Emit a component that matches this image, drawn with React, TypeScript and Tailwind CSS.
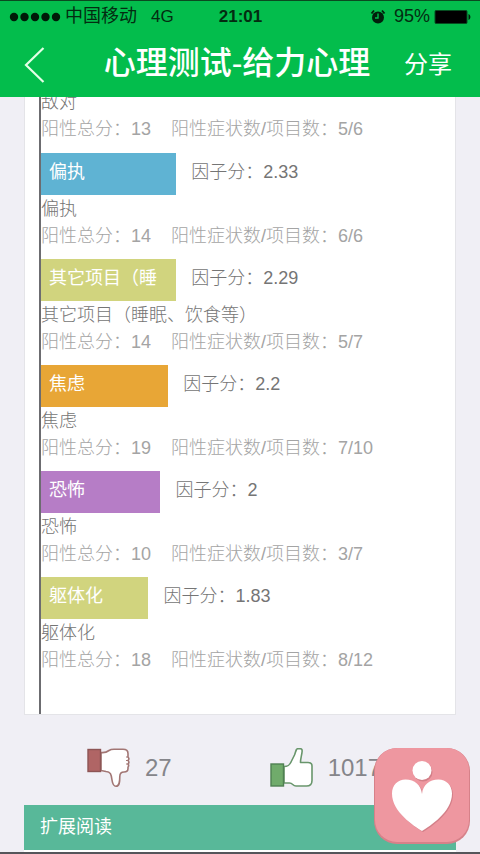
import { ReactNode } from 'react';

interface Factor {
  name: string;
  score: string;
  total: number;
  items: string;
  percent: number;
  color: string;
}

const FACTORS: Factor[] = [
  { name: '偏执', score: '2.33', total: 14, items: '6/6', percent: 34, color: 'bg-[#5fb3d3]' },
  { name: '其它项目（睡眠、饮食等）', score: '2.29', total: 14, items: '5/7', percent: 34, color: 'bg-[#d1d47e]' },
  { name: '焦虑', score: '2.2', total: 19, items: '7/10', percent: 32, color: 'bg-[#e8a636]' },
  { name: '恐怖', score: '2', total: 10, items: '3/7', percent: 30, color: 'bg-[#b67dc6]' },
  { name: '躯体化', score: '1.83', total: 18, items: '8/12', percent: 27, color: 'bg-[#d1d47e]' },
];

const BAR_LABEL_LENGTH = 6;

function FactorDetail({ name, total, items }: { name: string; total: number; items: string }) {
  return (
    <div className="pt-px leading-[27px] whitespace-nowrap">
      <p className="text-[#757575]">{name}</p>
      <p className="flex gap-5 text-[#a4a4a4]">
        <span>阳性总分：{total}</span>
        <span>阳性症状数/项目数：{items}</span>
      </p>
    </div>
  );
}

function FactorRow({ factor }: { factor: Factor }) {
  return (
    <li>
      <div className="flex h-[42px] gap-[15px] leading-[38px] whitespace-nowrap">
        <div className={`shrink-0 px-2 font-normal text-white ${factor.color}`} style={{ width: `${factor.percent}%` }}>
          {factor.name.slice(0, BAR_LABEL_LENGTH)}
        </div>
        <span className="text-[#757575]">因子分：{factor.score}</span>
      </div>
      <FactorDetail name={factor.name} total={factor.total} items={factor.items} />
    </li>
  );
}

function VoteButton({ label, count, children }: { label: string; count: number; children: ReactNode }) {
  return (
    <button type="button" aria-label={label} className="flex items-center gap-3.5 text-2xl text-[#85858a]">
      {children}
      <span>{count}</span>
    </button>
  );
}

function ThumbDown() {
  return (
    <svg width="44" height="40" viewBox="0 0 44 40" fill="none">
      <path
        d="M14 4.500c4 .5 6-.5 8-2 1.500-1 3-1.200 5-1.200h9c3.500 0 5 1.200 5 4.200v3.500c1 1 1 2.500 0 3.500 1 1 1 2.500 0 3.500.8 1 .8 2.200 0 3.200v1.300c0 2-1.500 3.500-4 3.500-3 0-4.200 1.500-4.200 4.500 0 5.500-.3 9.700-3.800 9.700-3 0-3.500-2.700-4-6.200-.7-5.500-1.500-8.500-6-8.500l-5-1z"
        fill="#fff"
        stroke="#a27674"
        strokeWidth="1.600"
        strokeLinejoin="round"
      />
      <path d="M41 9h-2M41 12.500h-2M41 16h-2" stroke="#a27674" />
      <rect x="1" y="1.500" width="12.500" height="22" fill="#b06565" stroke="#8d5555" strokeWidth="1.400" />
    </svg>
  );
}

function ThumbUp() {
  return (
    <svg width="44" height="40" viewBox="0 0 44 40" fill="none">
      <path
        d="M14 18.500c4 0 5.500-1 7-4.500l3.500-7c.8-2 1.200-4 2-5.500.3-.6.800-.8 1.500-.8h2.500c1.200 0 1.800 1.200 1.600 2.800-.3 3.500-1.600 7-1.600 11H38c2.500 0 4 1.200 4 3.500v14.500c0 3.500-2 5.500-5.500 5.500H26c-3.500 0-3-3-6.500-3H14z"
        fill="#fff"
        stroke="#69966c"
        strokeWidth="1.600"
        strokeLinejoin="round"
      />
      <rect x="1" y="16" width="12.500" height="22" fill="#70ab6b" stroke="#4f8052" strokeWidth="1.400" />
    </svg>
  );
}

function AlarmIcon() {
  return (
    <svg width="16" height="16" viewBox="0 0 16 16">
      <circle cx="8" cy="8.500" r="6" fill="#021f0c" />
      <path d="M1.500 4.500l2.500-3M14.500 4.500l-2.500-3" stroke="#021f0c" strokeWidth="1.800" />
      <path d="M8 4.500v4.500H5" stroke="#03bd4c" strokeWidth="1.400" fill="none" />
    </svg>
  );
}

function BatteryIcon() {
  return (
    <svg width="38" height="16" viewBox="0 0 38 16">
      <rect x="1" y="1.500" width="32" height="13" rx="1" fill="#000" stroke="#064d20" />
      <path d="M34.500 5c2.500.8 2.500 5.200 0 6z" fill="#021f0c" />
    </svg>
  );
}

function StatusBar() {
  return (
    <div className="flex h-8 items-center justify-between border-t border-[#0a4a20] pr-2 pl-[9px] text-[17px] text-[#032c11]">
      <div className="flex flex-1 items-center whitespace-nowrap">
        <svg width="52" height="10" viewBox="0 0 52 10" className="mr-1" fill="#001a08">
          <circle cx="5" cy="5" r="4.200" />
          <circle cx="15.500" cy="5" r="4.200" />
          <circle cx="26" cy="5" r="4.200" />
          <circle cx="36.500" cy="5" r="4.200" />
          <circle cx="47" cy="5" r="4.200" />
        </svg>
        <span className="mr-3.5 text-[18px] font-normal">中国移动</span>
        <span>4G</span>
      </div>
      <span className="font-bold">21:01</span>
      <div className="flex flex-1 items-center justify-end">
        <span className="mr-2">
          <AlarmIcon />
        </span>
        <span className="mr-1 text-[18px]">95%</span>
        <BatteryIcon />
      </div>
    </div>
  );
}

export default function App() {
  return (
    <div className="min-h-screen bg-[#f0eff5] font-['Liberation_Sans','Noto_Sans_CJK_SC',sans-serif] text-[18px] font-light">
      <header className="relative z-10 bg-[#03bd4c]">
        <StatusBar />
        <div className="flex h-[65px] items-center justify-between pr-7 pl-6 text-white">
          <button type="button" aria-label="返回" className="w-[46px]">
            <svg width="22" height="38" viewBox="0 0 22 38" fill="none" stroke="#e4ffe6" strokeWidth="2.200">
              <path d="M19.500 2 2 19l17.500 17" />
            </svg>
          </button>
          <h1 className="pb-1 text-[32px] leading-10 font-medium">心理测试-给力心理</h1>
          <button type="button" className="text-2xl font-normal">
            分享
          </button>
        </div>
      </header>

      <main className="-mt-[9px] px-6">
        <section className="border border-t-0 border-[#e4e4e8] bg-white pl-3.5">
          <div className="border-l-2 border-[#6c6c70] pr-4 pb-10">
            <FactorDetail name="敌对" total={13} items="5/6" />
            <ul className="mt-2.5 flex flex-col gap-[9px]">
              {FACTORS.map((factor) => (
                <FactorRow key={factor.name} factor={factor} />
              ))}
            </ul>
          </div>
        </section>

        <div className="flex h-[90px] items-center justify-center gap-[98px] pt-4 pr-3">
          <VoteButton label="没有帮助" count={27}>
            <ThumbDown />
          </VoteButton>
          <VoteButton label="有帮助" count={1017}>
            <ThumbUp />
          </VoteButton>
        </div>

        <section className="border-b-2 border-white">
          <h2 className="bg-[#58b899] px-4 leading-[45px] font-normal text-white">扩展阅读</h2>
        </section>
      </main>
      <div className="h-0.5 bg-[#55555a]" />

      {/* floating shortcut */}
      <button type="button" aria-label="关爱" className="fixed right-2.5 bottom-2.5 z-20">
        <svg width="96" height="96" viewBox="0 0 96 96">
          <rect width="96" height="96" rx="23" fill="#d68189" />
          <rect x="1" y="0" width="94" height="94" rx="22" fill="#ee97a0" />
          <circle cx="49" cy="24" r="9.500" fill="#d37f88" />
          <path
            d="M49 84C41 79 19 65 19 46.500 19 38 25 32.500 32.500 32.500 42 32.500 48 38 49 47 50 38 56 32.500 65.500 32.500 73 32.500 79 38 79 46.500 79 65 57 79 49 84z"
            fill="#d37f88"
          />
          <circle cx="48" cy="22.500" r="9.500" fill="#fff" />
          <path
            d="M48 83C40 78 18 64 18 45.500 18 37 24 31.500 31.500 31.500 41 31.500 47 37 48 46 49 37 55 31.500 64.500 31.500 72 31.500 78 37 78 45.500 78 64 56 78 48 83z"
            fill="#fff"
          />
        </svg>
      </button>
    </div>
  );
}
